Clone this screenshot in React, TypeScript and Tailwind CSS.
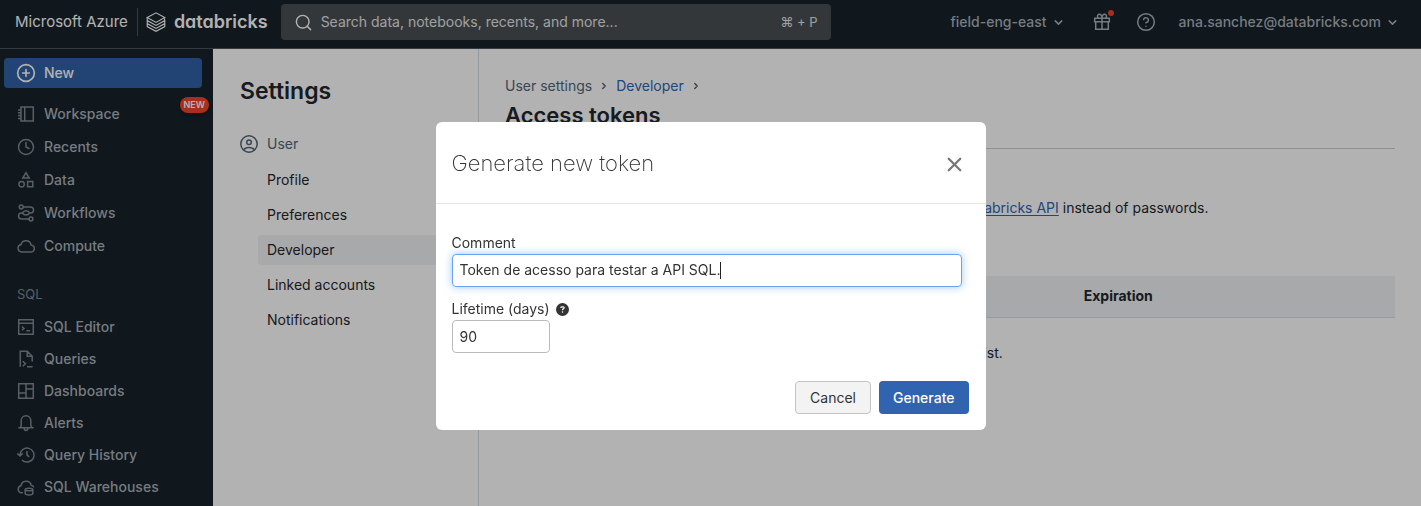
import React from "react";
import {
  ChevronDown,
  ChevronRight,
  CircleHelp,
  CirclePlus,
  Clock4,
  Search,
  X,
} from "lucide-react";
import { FaCircleQuestion } from "react-icons/fa6";

type IconProps = { className?: string };

function Glyph({ className, children }: IconProps & { children: React.ReactNode }) {
  return (
    <svg
      viewBox="0 0 18 18"
      fill="none"
      stroke="currentColor"
      strokeWidth="1.5"
      className={className}
      aria-hidden="true"
    >
      {children}
    </svg>
  );
}

const NotebookIcon = (p: IconProps) => (
  <Glyph {...p}>
    <path d="M4 2h12.300v14H4zM7.700 2v14M1 5h3M1 7.800h3M1 10.600h3M1 13.400h3" />
  </Glyph>
);

const ShapesIcon = (p: IconProps) => (
  <Glyph {...p}>
    <path d="M9 1.600 12.200 7H5.800zM10.600 10.600h5.200v5.200h-5.200z" />
    <circle cx="4.600" cy="13.200" r="2.700" />
  </Glyph>
);

const WorkflowIcon = (p: IconProps) => (
  <Glyph {...p}>
    <circle cx="4.200" cy="3" r="1.900" />
    <circle cx="14" cy="15" r="1.900" />
    <path d="M6.100 3h7.500a2.900 2.900 0 0 1 0 5.900h-1M12.100 15H4.600a2.900 2.900 0 0 1 0-6.100h1.200M5.400 8.900C7 6 11 6 12.700 8.900 11 11.800 7 11.800 5.400 8.900z" />
  </Glyph>
);

const CloudIcon = (p: IconProps) => (
  <Glyph {...p}>
    <path d="M4.600 15h9a3.500 3.500 0 0 0 .5-7A5.200 5.200 0 0 0 4 7.600 3.750 3.750 0 0 0 4.600 15z" />
  </Glyph>
);

const EditorIcon = (p: IconProps) => (
  <Glyph {...p}>
    <path d="M1.700 1.700h14.600v14.600H1.700zM1.700 5.300h14.600M5 8.500l2 1.900-2 1.900M9.300 12.700h3.700" />
  </Glyph>
);

const QueryFileIcon = (p: IconProps) => (
  <Glyph {...p}>
    <path d="M3.300 16.800V1.200h6.900l5 5v5.300M10.200 1.200v5h5M5.800 11.200l2.600 2.500-2.600 2.600M10 16.700h5.600" />
  </Glyph>
);

const DashboardIcon = (p: IconProps) => (
  <Glyph {...p}>
    <path d="M1.700 1.700h14.600v14.600H1.700zM9 1.700v14.600M1.700 11H9M9 7h7.300" />
  </Glyph>
);

const BellIcon = (p: IconProps) => (
  <Glyph {...p}>
    <path d="M1.300 13.800h15.400M3 13.800l1.200-2.300V6.600a4.800 4.800 0 0 1 9.600 0v4.900l1.200 2.300M7.200 14v.6a1.800 1.800 0 0 0 3.600 0V14" />
  </Glyph>
);

const HistoryIcon = (p: IconProps) => (
  <Glyph {...p}>
    <path d="M3 9.600V9a7 7 0 1 1 2 5M.3 7.400 3 10l2.700-2.600M10 5v4.200l2.200 1.600" />
  </Glyph>
);

const WarehouseIcon = (p: IconProps) => (
  <Glyph {...p}>
    <path d="M5.800 14.800H4.500A3.600 3.600 0 0 1 4 7.700a5.200 5.200 0 0 1 10.200-.4 3.600 3.600 0 0 1 2.700 2" />
    <ellipse cx="12" cy="11.500" rx="3.800" ry="1.300" />
    <path d="M8.200 11.500v4c0 .8 1.700 1.400 3.800 1.400s3.800-.6 3.800-1.400v-4" />
  </Glyph>
);

const GiftIcon = (p: IconProps) => (
  <Glyph {...p}>
    <path d="M1.700 5.200h14.600v3.600H1.700zM2.700 8.800h12.600v7.500H2.700zM9 5.200v11.100M9 5.200H6.200a2 2 0 1 1 2-3C8.700 3 9 4 9 5.200zM9 5.200h2.800a2 2 0 1 0-2-3C9.300 3 9 4 9 5.200z" />
  </Glyph>
);

const UserIcon = (p: IconProps) => (
  <Glyph {...p}>
    <circle cx="9" cy="9" r="8.200" />
    <circle cx="9" cy="7.200" r="2.300" />
    <path d="M3.600 15c1-1.600 3-2.400 5.400-2.400s4.400.8 5.400 2.400" />
  </Glyph>
);

const LogoMark = ({ className }: IconProps) => (
  <svg viewBox="0 0 20 20" fill="none" stroke="currentColor" strokeWidth="1.100" className={className} aria-hidden="true">
    <path d="M1.200 5.600 10 .8l8.800 4.800L10 10.400z" />
    <path d="M1.200 5.600v3L10 13.400l8.800-4.800-.3-2.400M1.200 8.600v3l8.800 4.800 8.800-4.800v-3M1.200 11.600v3L10 19.300l8.800-4.700v-3" />
  </svg>
);

type NavEntry = { label: string; Icon: React.ComponentType<any>; badge?: string };

const mainNav: NavEntry[] = [
  { label: "Workspace", Icon: NotebookIcon, badge: "NEW" },
  { label: "Recents", Icon: Clock4 },
  { label: "Data", Icon: ShapesIcon },
  { label: "Workflows", Icon: WorkflowIcon },
  { label: "Compute", Icon: CloudIcon },
];

const sqlNav: NavEntry[] = [
  { label: "SQL Editor", Icon: EditorIcon },
  { label: "Queries", Icon: QueryFileIcon },
  { label: "Dashboards", Icon: DashboardIcon },
  { label: "Alerts", Icon: BellIcon },
  { label: "Query History", Icon: HistoryIcon },
  { label: "SQL Warehouses", Icon: WarehouseIcon },
];

const settingsNav = ["Profile", "Preferences", "Developer", "Linked accounts", "Notifications"];

function NavItem({ label, Icon, badge }: NavEntry) {
  return (
    <li className="relative">
      <a href="#" className="flex h-8 items-center gap-[9px] pl-[17px] font-medium text-[#a9b2b9]">
        <Icon className="size-[18px] text-[#7f8a93]" />
        {label}
      </a>
      {badge && (
        <span className="absolute -top-px right-1 flex h-4 items-center rounded-full bg-[#f14427] px-1 text-[9px] font-semibold text-white shadow-md">
          {badge}
        </span>
      )}
    </li>
  );
}

function TopBar() {
  return (
    <header className="flex h-[49px] items-center border-b border-[#4c5359] bg-[#17212a] pb-1 text-white">
      <span className="border-r border-[#4c5359] py-[3px] pr-[9px] pl-[15px] text-[15px]">Microsoft Azure</span>
      <a href="#" className="ml-2 flex items-center gap-2">
        <LogoMark className="size-5" />
        <span className="text-lg leading-6 font-semibold [font-feature-settings:'cv11']">databricks</span>
      </a>
      <label className="ml-[13px] flex h-9 w-[550px] items-center gap-2 rounded bg-[#494f52] px-[13px]">
        <Search className="size-[19px]" strokeWidth={1.8} />
        <input
          type="search"
          aria-label="Search"
          placeholder="Search data, notebooks, recents, and more..."
          className="min-w-0 flex-1 bg-transparent outline-none placeholder:text-[#e4e6e7]"
        />
        <span className="text-[13px] text-[#e4e6e7]">⌘ + P</span>
      </label>
      <div className="ml-auto flex items-center pr-[22px] font-medium text-[#a9b2b9]">
        <button className="flex items-center gap-[5px]">
          field-eng-east
          <ChevronDown className="size-[13px]" strokeWidth={2.8} />
        </button>
        <button aria-label="What's new" className="relative ml-7">
          <GiftIcon className="size-[18px]" />
          <span className="absolute -top-[3px] -right-[3px] size-[6px] rounded-full bg-[#f14427]" />
        </button>
        <button aria-label="Help" className="ml-[25px]">
          <CircleHelp className="size-5" strokeWidth={1.8} />
        </button>
        <button className="ml-[23px] flex items-center gap-[5px]">
          ana.sanchez@databricks.com
          <ChevronDown className="size-[13px]" strokeWidth={2.8} />
        </button>
      </div>
    </header>
  );
}

function Sidebar() {
  return (
    <nav className="w-[213px] shrink-0 bg-[#17212a] pt-[9px]">
      <button className="ml-1 flex h-[30px] w-[198px] items-center gap-2 rounded bg-[#3162a8] pl-3 font-medium text-white">
        <CirclePlus className="size-5" strokeWidth={2} />
        New
      </button>
      <ul className="mt-[10px] flex flex-col gap-px">
        {mainNav.map((item) => (
          <NavItem key={item.label} {...item} />
        ))}
      </ul>
      <h2 className="mt-[22px] mb-[7px] pl-[17px] text-[13px] leading-5 text-[#7f8a93]">SQL</h2>
      <ul>
        {sqlNav.map((item) => (
          <NavItem key={item.label} {...item} />
        ))}
      </ul>
    </nav>
  );
}

function SettingsNav() {
  return (
    <aside className="w-[266px] shrink-0 border-r border-[#d5dde3] pt-[26px] pl-[27px] text-[#1f272d]">
      <h1 className="text-[23px] leading-8 font-semibold">Settings</h1>
      <div className="mt-[27px] flex items-center gap-[9px] leading-5 text-[#526577]">
        <UserIcon className="size-[18px]" />
        User
      </div>
      <ul className="mt-[11px] ml-[18px] flex flex-col gap-[5px]">
        {settingsNav.map((label) => (
          <li key={label}>
            <a
              href="#"
              className={
                label === "Developer"
                  ? "flex h-[30px] items-center rounded-l bg-[#f0f3f5] pl-[9px]"
                  : "flex h-[30px] items-center pl-[9px]"
              }
            >
              {label}
            </a>
          </li>
        ))}
      </ul>
    </aside>
  );
}

function AccessTokens() {
  return (
    <main className="min-w-0 flex-1 pt-[27px] pr-[26px] pl-[26px] text-[#1f272d]">
      <div className="flex items-center gap-[7px] leading-5 text-[#526577]">
        User settings
        <ChevronRight className="size-[10px]" strokeWidth={3.4} />
        <a href="#" className="text-[#2c66b5]">Developer</a>
        <ChevronRight className="size-[10px]" strokeWidth={3.4} />
      </div>
      <h2 className="mt-[3px] border-b border-[#c4d0db] pb-[17px] text-[22px] leading-8 font-semibold">Access tokens</h2>
      <p className="mt-[49px] leading-5">
        Personal access tokens can be used for secure authentication to the{" "}
        <a href="#" className="text-[#2c66b5] underline underline-offset-2">Databricks API</a> instead of passwords.
      </p>
      <table className="mt-[58px] w-full table-fixed">
        <thead>
          <tr className="h-[41px] border-b border-[#d5e0e8] bg-[#f0f3f5] text-left">
            <th className="w-[31%]" aria-label="Comment" />
            <th className="w-[32%]" aria-label="Creation" />
            <th className="pl-[18px] font-bold">Expiration</th>
          </tr>
        </thead>
        <tbody>
          <tr>
            <td colSpan={3} className="h-[72px] text-center">No tokens exist.</td>
          </tr>
        </tbody>
      </table>
    </main>
  );
}

function TokenDialog() {
  return (
    <div className="fixed inset-0 flex items-start justify-center bg-black/30 pt-[122px]">
      <form
        role="dialog"
        aria-labelledby="dialog-title"
        className="w-[550px] rounded-md bg-white text-[#333]"
        onSubmit={(e) => e.preventDefault()}
      >
        <div className="flex h-[82px] items-center justify-between border-b border-[#e8e8e8] pr-5 pl-4">
          <h2 id="dialog-title" className="text-[22px] leading-8 font-extralight">Generate new token</h2>
          <button type="button" aria-label="Close" className="mt-1 text-[#777]">
            <X className="size-[23px]" strokeWidth={2.4} />
          </button>
        </div>
        <div className="pt-[29px] pr-6 pl-4">
          <label htmlFor="comment" className="block leading-5">Comment</label>
          <div className="mt-px flex h-[33px] items-center rounded border border-[#66a3f0] px-[7px] pb-px text-[#333] shadow-[0_0_8px_#66a3f099]">
            <input id="comment" defaultValue="Token de acesso para testar a API SQL." className="field-sizing-content outline-none" />
            <span className="h-[17px] w-px bg-[#222]" />
          </div>
          <div className="mt-3 flex items-center gap-[6px]">
            <label htmlFor="lifetime" className="leading-5">Lifetime (days)</label>
            <FaCircleQuestion className="size-[13px]" />
          </div>
          <input
            id="lifetime"
            defaultValue="90"
            className="mt-px block h-[33px] w-[98px] rounded border border-[#bbb] px-[7px] pb-px text-[#333]"
          />
        </div>
        <div className="flex justify-end gap-2 px-[17px] pt-7 pb-4">
          <button type="button" className="h-[33px] rounded border border-[#c4c4c4] bg-[#f3f3f3] px-[14px]">Cancel</button>
          <button type="submit" className="h-[33px] rounded bg-[#3064b0] px-[14px] font-medium text-white">Generate</button>
        </div>
      </form>
    </div>
  );
}

export default function App() {
  return (
    <div className="flex h-screen flex-col overflow-hidden bg-white font-[Inter,sans-serif] text-sm">
      <TopBar />
      <div className="flex min-h-0 flex-1">
        <Sidebar />
        <SettingsNav />
        <AccessTokens />
      </div>
      <TokenDialog />
    </div>
  );
}
